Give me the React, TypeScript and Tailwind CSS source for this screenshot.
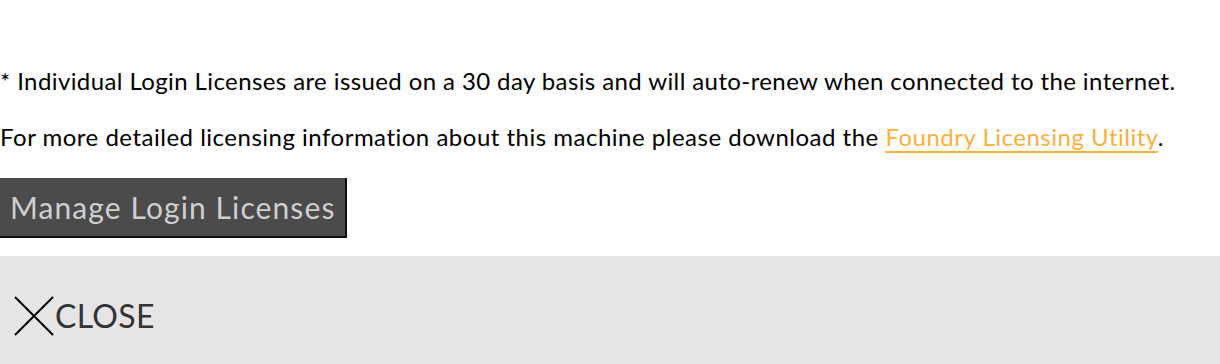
import React from 'react';

export default function App() {
  return (
    <div className="w-[1220px] h-[364px] overflow-hidden bg-white" style={{ fontFamily: 'Lato, "Noto Sans", sans-serif' }}>
      <div className="pt-[64px]">
        <p className="text-[24px] leading-[34px] tracking-[0.4px] text-black">
          * Individual Login Licenses are issued on a 30 day basis and will auto-renew when connected to the internet.
        </p>
        <p className="mt-[22px] text-[24px] leading-[34px] tracking-[0.5px] text-black">
          For more detailed licensing information about this machine please download the{' '}
          <a href="#" className="text-[#fbb03b] underline underline-offset-[5px] decoration-2">Foundry Licensing Utility</a>.
        </p>
        <button className="mt-[24px] h-[60px] px-[10px] bg-[#4b4b4b] text-[#cfcfcf] text-[30px] tracking-[1.1px] border-r-2 border-b-2 border-[#111]">
          Manage Login Licenses
        </button>
      </div>
      <div className="mt-[18px] h-[108px] bg-[#e5e5e5] flex items-center pl-[14px] pt-[12px]">
        <button className="flex items-center text-[#333] text-[32px] tracking-[0.3px] leading-none">
          <svg width="40" height="40" viewBox="0 0 40 40" className="mr-[1px]">
            <path d="M1 1L39 39M39 1L1 39" stroke="#000" strokeWidth="2" />
          </svg>
          CLOSE
        </button>
      </div>
    </div>
  );
}
